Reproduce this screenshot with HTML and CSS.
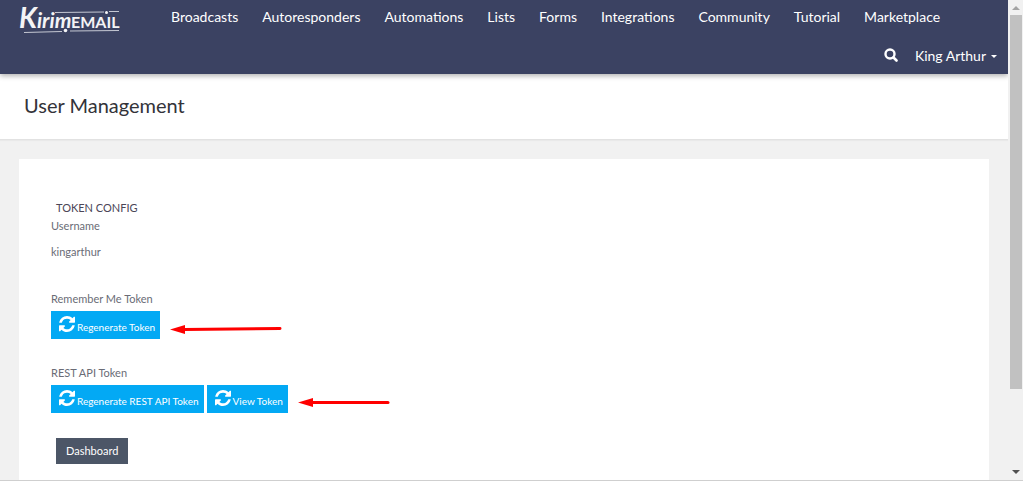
FILE: index.html
```
<!DOCTYPE html>
<html lang="en">
<head>
  <meta charset="UTF-8">
  <title>User Management</title>
  <link rel="stylesheet" href="styles.css">
</head>
<body>
  <svg class="sprite" aria-hidden="true">
    <symbol id="refresh" viewBox="0 0 1536 1536">
      <path fill="currentColor" d="M1511 928q0 5-1 7-64 268-268 434.500T764 1536q-146 0-282.500-55T238 1324l-129 129q-19 19-45 19t-45-19-19-45V960q0-26 19-45t45-19h448q26 0 45 19t19 45-19 45l-137 137q71 66 161 102t187 36q134 0 250-65t186-179q11-17 53-117 8-23 30-23h192q13 0 22.500 9.500t9.500 22.500zm25-800v448q0 26-19 45t-45 19h-448q-26 0-45-19t-19-45 19-45l138-138Q969 256 768 256q-134 0-250 65T332 500q-11 17-53 117-8 23-30 23H50q-13 0-22.500-9.500T18 608v-7q65-268 270-434.500T768 0q146 0 284 55.500T1297 212l130-129q19-19 45-19t45 19 19 45z"/>
    </symbol>
  </svg>

  <div class="window">
    <div class="page">
      <header class="navbar">
        <a class="brand" href="#" aria-label="Kirim Email">
          <svg width="102" height="34" viewBox="0 0 102 34" fill="#f4f4f6">
            <text class="brand-kirim" x="1" y="28"><tspan class="brand-k">K</tspan>irim</text>
            <text class="brand-email" x="53" y="28">EMAIL</text>
            <path d="M37 12.500 86 12M91 11.500H101M6 32.500 44 31.500M52 31 101 30.500" fill="none" stroke="#c5c8d3"/>
            <circle cx="47.500" cy="30.500" r="1.800"/>
            <circle cx="88.500" cy="12.500" r="1.500"/>
          </svg>
        </a>
        <nav class="menu">
          <a href="#">Broadcasts</a>
          <a href="#">Autoresponders</a>
          <a href="#">Automations</a>
          <a href="#">Lists</a>
          <a href="#">Forms</a>
          <a href="#">Integrations</a>
          <a href="#">Community</a>
          <a href="#">Tutorial</a>
          <a href="#">Marketplace</a>
        </nav>
        <div class="account">
          <button class="search" type="button" aria-label="Search">
            <svg width="14" height="14" viewBox="0 0 14 14" fill="none" stroke="#fff">
              <circle cx="6" cy="6" r="4.500" stroke-width="2.400"/>
              <path d="M9.500 9.500 12.500 12.500" stroke-width="2.600" stroke-linecap="round"/>
            </svg>
          </button>
          <button class="user" type="button">King Arthur <span class="caret"></span></button>
        </div>
      </header>

      <div class="heading">
        <h1>User Management</h1>
      </div>

      <main class="panel">
        <h2>TOKEN CONFIG</h2>
        <div class="group">
          <p class="label">Username</p>
          <p class="value">kingarthur</p>
        </div>
        <div class="group">
          <p class="label">Remember Me Token</p>
          <div class="actions">
            <button class="btn" type="button"><svg class="icon"><use href="#refresh"/></svg><span>Regenerate Token</span></button>
            <svg class="arrow" width="112" height="12" viewBox="0 0 112 12">
              <path d="M14 7.500 110 6.500" stroke="#f00" stroke-width="3" stroke-linecap="round"/>
              <path d="M0 7.500 15 3V12z" fill="#f00"/>
            </svg>
          </div>
        </div>
        <div class="group">
          <p class="label">REST API Token</p>
          <div class="actions">
            <button class="btn" type="button"><svg class="icon"><use href="#refresh"/></svg><span>Regenerate REST API Token</span></button>
            <button class="btn" type="button"><svg class="icon"><use href="#refresh"/></svg><span>View Token</span></button>
            <svg class="arrow" width="92" height="12" viewBox="0 0 92 12">
              <path d="M14 6.500H90" stroke="#f00" stroke-width="3" stroke-linecap="round"/>
              <path d="M0 6.500 15 2V11z" fill="#f00"/>
            </svg>
          </div>
        </div>
        <a class="dashboard" href="#">Dashboard</a>
      </main>
    </div>

    <div class="scrollbar" aria-hidden="true">
      <span class="up"></span>
      <span class="thumb"></span>
      <span class="down"></span>
    </div>
  </div>
</body>
</html>
```
FILE: styles.css
```
* {
  box-sizing: border-box;
}
body {
  margin: 0;
  height: 100vh;
  display: flex;
  flex-direction: column;
  background: #fff;
  color: #6a6c76;
  font-family: Lato, sans-serif;
  font-size: 11px;
  overflow: hidden;
}
h1, h2, p {
  margin: 0;
  font-weight: normal;
}
a {
  color: inherit;
  text-decoration: none;
}
button {
  border: 0;
  padding: 0;
  background: none;
  color: #fff;
  font: inherit;
}
.sprite {
  display: none;
}

.window {
  flex: 1;
  min-height: 0;
  margin-bottom: 1px;
  display: flex;
  border-bottom: 1px solid #cfcfcf;
}
.page {
  flex: 1;
  min-width: 0;
  display: flex;
  flex-direction: column;
  overflow: hidden;
  background: #f1f1f1;
}

/* top bar */
.navbar {
  flex: none;
  position: relative;
  display: flex;
  flex-wrap: wrap;
  padding: 0 11px 0 18px;
  background: #3b4262;
  box-shadow: 0 2px 5px rgba(0, 0, 0, 0.3);
  color: #fff;
  font-size: 14px;
}
.brand {
  width: 153px;
  height: 36px;
}
.brand svg {
  display: block;
}
.brand-kirim {
  font-size: 21px;
  font-style: italic;
  font-weight: bold;
}
.brand-k {
  font-size: 28px;
}
.brand-email {
  font-size: 16px;
  font-weight: bold;
}
.menu {
  flex: 1;
  display: flex;
  gap: 24px;
  line-height: 33px;
  white-space: nowrap;
}
.account {
  width: 100%;
  display: flex;
  justify-content: flex-end;
  align-items: center;
  gap: 17px;
  height: 38px;
}
.search svg {
  display: block;
}
.user {
  display: flex;
  align-items: center;
  gap: 5px;
}
.caret {
  margin-top: 3px;
  border: 3px solid transparent;
  border-top-color: #fff;
  border-bottom: 0;
}

.heading {
  flex: none;
  padding: 0 24px 2px;
  background: #fff;
  border-bottom: 1px solid #e2e2e2;
  box-shadow: 0 1px 1px #e9e9e9;
}
h1 {
  color: #333339;
  font-size: 20px;
  line-height: 63px;
}

/* token settings */
.panel {
  flex: 1 0 auto;
  margin: 19px 19px 0;
  padding: 40px 32px;
  background: #fff;
}
h2 {
  padding-left: 5px;
  color: #4b4657;
  font-size: 11px;
  line-height: 18px;
}
.label {
  line-height: 18px;
}
.value {
  padding: 8px 0 4px;
  line-height: 18px;
}
.group {
  margin-bottom: 25px;
}
.actions {
  display: flex;
  align-items: center;
  gap: 3px;
  margin-top: 3px;
}
.btn {
  display: flex;
  align-items: center;
  gap: 2px;
  height: 28px;
  padding: 0 5px 0 8px;
  background: #03a9f4;
  font-size: 10px;
}
.btn span {
  padding-top: 4px;
}
.icon {
  width: 16px;
  height: 16px;
  margin-bottom: 3px;
}
.arrow {
  margin: 5px 0 0 7px;
}
.dashboard {
  display: inline-block;
  margin-left: 5px;
  padding: 0 10px;
  background: #4c5667;
  color: #fff;
  line-height: 26px;
}

.scrollbar {
  width: 15px;
  display: flex;
  flex-direction: column;
  align-items: center;
  padding: 6px 0;
  background: #f1f1f1;
}
.up, .down {
  border: 4px solid transparent;
}
.up {
  border-top: 0;
  border-bottom-color: #a3a3a3;
}
.down {
  margin-top: auto;
  border-bottom: 0;
  border-top-color: #505050;
}
.thumb {
  width: 12px;
  height: 80%;
  margin-top: 5px;
  background: #c1c1c1;
}
```
